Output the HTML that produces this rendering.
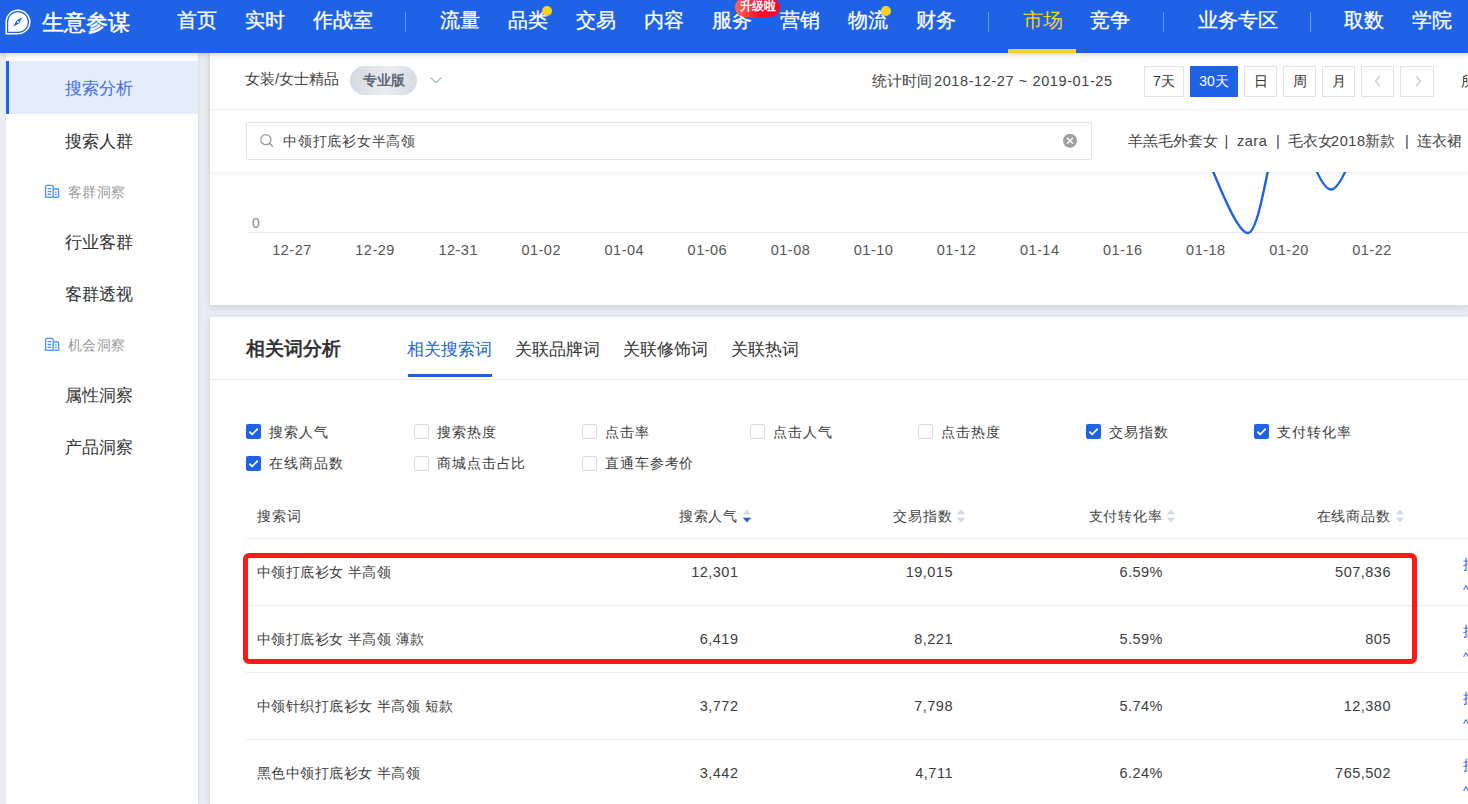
<!DOCTYPE html>
<html><head><meta charset="utf-8">
<style>
*{box-sizing:border-box;margin:0;padding:0}
html,body{width:1468px;height:804px;overflow:hidden}
body{position:relative;background:#e9ecf1;font-family:"Liberation Sans",sans-serif;color:#333}
.a{position:absolute;white-space:nowrap}
#nav{position:absolute;left:0;top:0;width:1468px;height:53px;background:#2062e6;z-index:5;box-shadow:0 1px 6px rgba(0,0,0,.2)}
#nav .m{position:absolute;top:8px;font-size:19.5px;line-height:24px;color:#fff;-webkit-text-stroke:.3px currentColor}
#nav .dv{position:absolute;top:12px;width:1px;height:20px;background:rgba(255,255,255,.35)}
#nav .dot{position:absolute;width:10px;height:10px;border-radius:50%;background:#f6d21f}
#side{position:absolute;left:6px;top:52px;width:192px;height:752px;background:#fff;box-shadow:1px 0 3px rgba(0,0,0,.07)}
#side .it{position:absolute;left:59px;font-size:16.5px;line-height:20px;color:#333}
#side .hd{position:absolute;left:62px;font-size:14px;letter-spacing:.4px;line-height:16px;color:#999}
#card1{position:absolute;left:210px;top:52px;width:1258px;height:253px;background:#fff;box-shadow:0 2px 7px rgba(0,0,0,.13)}
#card2{position:absolute;left:210px;top:317px;width:1258px;height:487px;background:#fff;box-shadow:0 2px 7px rgba(0,0,0,.13)}
.btn{position:absolute;top:66px;height:31px;border:1px solid #e2e2e2;background:#fff;font-size:14px;line-height:29px;text-align:center;color:#333}
</style></head><body>

<div id="nav">
  <svg class="a" style="left:5px;top:9px" width="26" height="26" viewBox="0 0 26 26">
    <path d="M13 1.2a11.8 11.8 0 1 1 0 23.6H1.2V13A11.8 11.8 0 0 1 13 1.2z" fill="none" stroke="#fff" stroke-width="1.5"/>
    <path d="M13 3.2a9.8 9.8 0 1 1 0 19.6H3.2V13A9.8 9.8 0 0 1 13 3.2z" fill="#fff"/>
    <path d="M17.5 8.2L14.2 14.2L8.2 17.8L11.6 11.6z" fill="#2062e6"/>
    <circle cx="12.9" cy="12.9" r="1" fill="#fff"/>
  </svg>
  <div class="a" style="left:42px;top:9px;font-size:22px;line-height:28px;color:#fff;-webkit-text-stroke:.5px #fff">生意参谋</div>
  <div class="m" style="left:177px">首页</div>
  <div class="m" style="left:245px">实时</div>
  <div class="m" style="left:313px">作战室</div>
  <div class="dv" style="left:405px"></div>
  <div class="m" style="left:440px">流量</div>
  <div class="m" style="left:508px">品类</div>
  <div class="dot" style="left:542px;top:6px"></div>
  <div class="m" style="left:576px">交易</div>
  <div class="m" style="left:644px">内容</div>
  <div class="m" style="left:712px">服务</div>
  <div class="m" style="left:780px">营销</div>
  <div class="m" style="left:848px">物流</div>
  <div class="dot" style="left:881px;top:6px"></div>
  <div class="m" style="left:916px">财务</div>
  <div class="a" style="left:735px;top:-2px;width:45px;height:19px;border-radius:9.5px;background:linear-gradient(90deg,#ff6d55,#ff0a30 55%,#ff002a);color:#fff;font-size:12px;line-height:17px;text-align:center;font-weight:bold;padding-top:0">升级啦</div>
  <div class="dv" style="left:988px"></div>
  <div class="m" style="left:1023px;color:#f6d121;-webkit-text-stroke:0">市场</div>
  <div class="a" style="left:1008px;top:49px;width:68px;height:4px;background:#f6d121"></div>
  <div class="m" style="left:1090px">竞争</div>
  <div class="dv" style="left:1163px"></div>
  <div class="m" style="left:1198px">业务专区</div>
  <div class="dv" style="left:1310px"></div>
  <div class="m" style="left:1344px">取数</div>
  <div class="m" style="left:1412px">学院</div>
</div>

<div id="side">
  <div class="a" style="left:0;top:9px;width:192px;height:53px;background:#e5edfb;border-left:3px solid #2062e6"></div>
  <div class="it" style="top:26px;color:#3f6fe3">搜索分析</div>
  <div class="it" style="top:79px">搜索人群</div>
  <svg class="a" style="left:38px;top:132px" width="16" height="14" viewBox="0 0 16 14"><g fill="none" stroke="#4596f7" stroke-width="1.3"><path d="M1.6 13V2.6Q1.6 1.4 2.8 1.4H8Q9.2 1.4 9.2 2.6V13"/><path d="M9.2 5H13.6Q14.6 5 14.6 6V13"/><path d="M0.6 13.2H15.4"/><path d="M3.6 4.6H7.2M3.6 7.5H7.2M3.6 10.4H7.2M11 8.2H12.8M11 10.6H12.8"/></g></svg><div class="hd" style="top:132px">客群洞察</div>
  <div class="it" style="top:180px">行业客群</div>
  <div class="it" style="top:232px">客群透视</div>
  <svg class="a" style="left:38px;top:285px" width="16" height="14" viewBox="0 0 16 14"><g fill="none" stroke="#4596f7" stroke-width="1.3"><path d="M1.6 13V2.6Q1.6 1.4 2.8 1.4H8Q9.2 1.4 9.2 2.6V13"/><path d="M9.2 5H13.6Q14.6 5 14.6 6V13"/><path d="M0.6 13.2H15.4"/><path d="M3.6 4.6H7.2M3.6 7.5H7.2M3.6 10.4H7.2M11 8.2H12.8M11 10.6H12.8"/></g></svg><div class="hd" style="top:285px">机会洞察</div>
  <div class="it" style="top:333px">属性洞察</div>
  <div class="it" style="top:385px">产品洞察</div>
</div>

<div id="card1"></div>
<!-- chart -->
<svg class="a" style="left:210px;top:172px" width="1258" height="133" viewBox="210 172 1258 133">
  <line x1="247" y1="232.5" x2="1468" y2="232.5" stroke="#e6ecf5" stroke-width="1"/>
  <path d="M1204 150 C1214 172, 1236 233, 1247.9 233 C1256 233, 1263 196, 1272 150 M1308 150 C1316 172, 1324 189.5, 1331 189.5 C1338 189.5, 1346 172, 1354 150" fill="none" stroke="#2062e6" stroke-width="2.4"/>
</svg>
<div class="a" style="left:252px;top:214px;font-size:14px;line-height:18px;color:#888">0</div>
<div class="a" id="xl" style="left:0;top:241px;font-size:14.5px;line-height:18px;color:#555;letter-spacing:.5px"><span style="position:absolute;left:272.0px;width:40px;text-align:center">12-27</span><span style="position:absolute;left:355.1px;width:40px;text-align:center">12-29</span><span style="position:absolute;left:438.2px;width:40px;text-align:center">12-31</span><span style="position:absolute;left:521.2px;width:40px;text-align:center">01-02</span><span style="position:absolute;left:604.3px;width:40px;text-align:center">01-04</span><span style="position:absolute;left:687.4px;width:40px;text-align:center">01-06</span><span style="position:absolute;left:770.5px;width:40px;text-align:center">01-08</span><span style="position:absolute;left:853.6px;width:40px;text-align:center">01-10</span><span style="position:absolute;left:936.6px;width:40px;text-align:center">01-12</span><span style="position:absolute;left:1019.7px;width:40px;text-align:center">01-14</span><span style="position:absolute;left:1102.8px;width:40px;text-align:center">01-16</span><span style="position:absolute;left:1185.9px;width:40px;text-align:center">01-18</span><span style="position:absolute;left:1269.0px;width:40px;text-align:center">01-20</span><span style="position:absolute;left:1352.0px;width:40px;text-align:center">01-22</span></div>
<!-- sticky header -->
<div class="a" style="left:210px;top:52px;width:1258px;height:120px;background:#fff;box-shadow:0 2px 4px rgba(0,0,0,.06)">
</div>
<div class="a" style="left:210px;top:109px;width:1258px;height:1px;background:#eeeeee"></div>
<div class="a" style="left:245px;top:70px;font-size:15px;line-height:18px;color:#444;letter-spacing:.05px">女装/女士精品</div>
<div class="a" style="left:350px;top:66px;width:67px;height:29px;border-radius:14.5px;background:linear-gradient(100deg,#d3d7e1 0%,#ebecf1 55%,#d6d9e3 100%);color:#5e6679;font-size:14px;line-height:29px;text-align:center;font-weight:bold">专业版</div>
<svg class="a" style="left:429px;top:75px" width="14" height="10" viewBox="0 0 14 10"><path d="M1.5 2.5L7 7.5L12.5 2.5" fill="none" stroke="#a6bdd1" stroke-width="1.3"/></svg>
<div class="a" style="left:872px;top:72px;font-size:14.5px;line-height:18px;color:#444">统计时间</div><div class="a" style="left:934px;top:72px;font-size:14.5px;line-height:18px;color:#444;letter-spacing:.6px">2018-12-27 ~ 2019-01-25</div>
<div class="btn" style="left:1144px;width:40px">7天</div>
<div class="btn" style="left:1190px;width:48px;background:#2062e6;border-color:#2062e6;color:#fff">30天</div>
<div class="btn" style="left:1244px;width:33px">日</div>
<div class="btn" style="left:1283px;width:33px">周</div>
<div class="btn" style="left:1322px;width:33px">月</div>
<div class="btn" style="left:1361px;width:33px"><svg style="position:absolute;left:10px;top:7px" width="12" height="14" viewBox="0 0 12 14"><path d="M8 2L3.5 7L8 12" fill="none" stroke="#c8c8c8" stroke-width="1.2"/></svg></div>
<div class="btn" style="left:1400px;width:34px"><svg style="position:absolute;left:11px;top:7px" width="12" height="14" viewBox="0 0 12 14"><path d="M4 2L8.5 7L4 12" fill="none" stroke="#c8c8c8" stroke-width="1.2"/></svg></div>
<div class="a" style="left:1461px;top:72px;font-size:14px;line-height:18px;color:#333">所有终端</div>
<div class="a" style="left:246px;top:122px;width:846px;height:38px;border:1px solid #e3e3e3;border-radius:2px;background:#fff"></div>
<svg class="a" style="left:258px;top:132px" width="18" height="18" viewBox="0 0 18 18"><circle cx="7.9" cy="7.7" r="5" fill="none" stroke="#999" stroke-width="1.3"/><path d="M11.5 11.3L14.8 14.6" stroke="#999" stroke-width="1.4"/></svg>
<div class="a" style="left:283px;top:132px;font-size:14px;line-height:18px;color:#444;letter-spacing:.75px">中领打底衫女半高领</div>
<svg class="a" style="left:1062px;top:133px" width="16" height="16" viewBox="0 0 16 16"><circle cx="8" cy="7.7" r="7" fill="#a0a0a0"/><path d="M5 4.7L11 10.7M11 4.7L5 10.7" stroke="#fff" stroke-width="1.3"/></svg>
<div class="a" style="left:1128px;top:132px;font-size:14.5px;line-height:18px;color:#444;letter-spacing:0px">羊羔毛外套女</div><div class="a" style="left:1224.5px;top:132px;font-size:14.5px;line-height:18px;color:#444;letter-spacing:0px">|</div><div class="a" style="left:1237px;top:132px;font-size:14.5px;line-height:18px;color:#444;letter-spacing:0.5px">zara</div><div class="a" style="left:1276px;top:132px;font-size:14.5px;line-height:18px;color:#444;letter-spacing:0px">|</div><div class="a" style="left:1288px;top:132px;font-size:14.5px;line-height:18px;color:#444;letter-spacing:0px">毛衣女</div><div class="a" style="left:1331px;top:132px;font-size:14.5px;line-height:18px;color:#444;letter-spacing:0.6px">2018</div><div class="a" style="left:1365px;top:132px;font-size:14.5px;line-height:18px;color:#444;letter-spacing:0px">新款</div><div class="a" style="left:1405px;top:132px;font-size:14.5px;line-height:18px;color:#444;letter-spacing:0px">|</div><div class="a" style="left:1417px;top:132px;font-size:14.5px;line-height:18px;color:#444;letter-spacing:0px">连衣裙</div>
<div id="card2"></div>
<div class="a" style="left:246px;top:337px;font-size:19px;line-height:24px;color:#333;font-weight:bold">相关词分析</div>
<div class="a" style="left:407px;top:339px;font-size:17px;line-height:22px;color:#2062e6">相关搜索词</div>
<div class="a" style="left:408px;top:374px;width:84px;height:3px;background:#2062e6"></div>
<div class="a" style="left:515px;top:339px;font-size:17px;line-height:22px;color:#333">关联品牌词</div>
<div class="a" style="left:623px;top:339px;font-size:17px;line-height:22px;color:#333">关联修饰词</div>
<div class="a" style="left:731px;top:339px;font-size:17px;line-height:22px;color:#333">关联热词</div>
<div class="a" style="left:210px;top:379px;width:1258px;height:1px;background:#e8e8e8"></div>
<!-- checkboxes -->
<div id="cbs"><div class="a" style="left:246px;top:424px;width:15px;height:15px;border-radius:2px;background:#2062e6"><svg style="position:absolute;left:0;top:0" width="15" height="15" viewBox="0 0 15 15"><path d="M3.3 7.6L6.2 10.4L11.8 4.6" fill="none" stroke="#fff" stroke-width="1.6"/></svg></div><div class="a" style="left:269px;top:423px;font-size:14px;letter-spacing:.9px;line-height:18px;color:#3d3d3d">搜索人气</div><div class="a" style="left:414px;top:424px;width:15px;height:15px;border-radius:2px;border:1px solid #dcdcdc;background:#fff"></div><div class="a" style="left:437px;top:423px;font-size:14px;letter-spacing:.9px;line-height:18px;color:#3d3d3d">搜索热度</div><div class="a" style="left:582px;top:424px;width:15px;height:15px;border-radius:2px;border:1px solid #dcdcdc;background:#fff"></div><div class="a" style="left:605px;top:423px;font-size:14px;letter-spacing:.9px;line-height:18px;color:#3d3d3d">点击率</div><div class="a" style="left:750px;top:424px;width:15px;height:15px;border-radius:2px;border:1px solid #dcdcdc;background:#fff"></div><div class="a" style="left:773px;top:423px;font-size:14px;letter-spacing:.9px;line-height:18px;color:#3d3d3d">点击人气</div><div class="a" style="left:918px;top:424px;width:15px;height:15px;border-radius:2px;border:1px solid #dcdcdc;background:#fff"></div><div class="a" style="left:941px;top:423px;font-size:14px;letter-spacing:.9px;line-height:18px;color:#3d3d3d">点击热度</div><div class="a" style="left:1086px;top:424px;width:15px;height:15px;border-radius:2px;background:#2062e6"><svg style="position:absolute;left:0;top:0" width="15" height="15" viewBox="0 0 15 15"><path d="M3.3 7.6L6.2 10.4L11.8 4.6" fill="none" stroke="#fff" stroke-width="1.6"/></svg></div><div class="a" style="left:1109px;top:423px;font-size:14px;letter-spacing:.9px;line-height:18px;color:#3d3d3d">交易指数</div><div class="a" style="left:1254px;top:424px;width:15px;height:15px;border-radius:2px;background:#2062e6"><svg style="position:absolute;left:0;top:0" width="15" height="15" viewBox="0 0 15 15"><path d="M3.3 7.6L6.2 10.4L11.8 4.6" fill="none" stroke="#fff" stroke-width="1.6"/></svg></div><div class="a" style="left:1277px;top:423px;font-size:14px;letter-spacing:.9px;line-height:18px;color:#3d3d3d">支付转化率</div><div class="a" style="left:246px;top:456px;width:15px;height:15px;border-radius:2px;background:#2062e6"><svg style="position:absolute;left:0;top:0" width="15" height="15" viewBox="0 0 15 15"><path d="M3.3 7.6L6.2 10.4L11.8 4.6" fill="none" stroke="#fff" stroke-width="1.6"/></svg></div><div class="a" style="left:269px;top:454px;font-size:14px;letter-spacing:.9px;line-height:18px;color:#3d3d3d">在线商品数</div><div class="a" style="left:414px;top:456px;width:15px;height:15px;border-radius:2px;border:1px solid #dcdcdc;background:#fff"></div><div class="a" style="left:437px;top:454px;font-size:14px;letter-spacing:.9px;line-height:18px;color:#3d3d3d">商城点击占比</div><div class="a" style="left:582px;top:456px;width:15px;height:15px;border-radius:2px;border:1px solid #dcdcdc;background:#fff"></div><div class="a" style="left:605px;top:454px;font-size:14px;letter-spacing:.9px;line-height:18px;color:#3d3d3d">直通车参考价</div></div>
<!-- table -->
<div id="tbl"><div class="a" style="left:257px;top:507px;font-size:14px;letter-spacing:.8px;line-height:18px;color:#444">搜索词</div><div class="a" style="left:538.0px;width:200px;text-align:right;top:507px;font-size:14px;letter-spacing:.8px;line-height:18px;color:#444">搜索人气</div><svg class="a" style="left:742px;top:508px" width="10" height="16" viewBox="0 0 10 16"><path d="M5 1.5L9.2 6.3H0.8z" fill="#d0d9e5"/><path d="M5 14.5L9.2 9.7H0.8z" fill="#2062e6"/></svg><div class="a" style="left:752.5px;width:200px;text-align:right;top:507px;font-size:14px;letter-spacing:.8px;line-height:18px;color:#444">交易指数</div><svg class="a" style="left:956px;top:508px" width="10" height="16" viewBox="0 0 10 16"><path d="M5 1.5L9.2 6.3H0.8z" fill="#d0d9e5"/><path d="M5 14.5L9.2 9.7H0.8z" fill="#d0d9e5"/></svg><div class="a" style="left:962.5px;width:200px;text-align:right;top:507px;font-size:14px;letter-spacing:.8px;line-height:18px;color:#444">支付转化率</div><svg class="a" style="left:1166px;top:508px" width="10" height="16" viewBox="0 0 10 16"><path d="M5 1.5L9.2 6.3H0.8z" fill="#d0d9e5"/><path d="M5 14.5L9.2 9.7H0.8z" fill="#d0d9e5"/></svg><div class="a" style="left:1190.5px;width:200px;text-align:right;top:507px;font-size:14px;letter-spacing:.8px;line-height:18px;color:#444">在线商品数</div><svg class="a" style="left:1395px;top:508px" width="10" height="16" viewBox="0 0 10 16"><path d="M5 1.5L9.2 6.3H0.8z" fill="#d0d9e5"/><path d="M5 14.5L9.2 9.7H0.8z" fill="#d0d9e5"/></svg><div class="a" style="left:246px;top:538px;width:1222px;height:1px;background:#eeeeee"></div><div class="a" style="left:246px;top:605px;width:1222px;height:1px;background:#eeeeee"></div><div class="a" style="left:246px;top:672px;width:1222px;height:1px;background:#eeeeee"></div><div class="a" style="left:246px;top:739px;width:1222px;height:1px;background:#eeeeee"></div><div class="a" style="left:257px;top:562.5px;font-size:14px;letter-spacing:.45px;line-height:18px;color:#3d3d3d">中领打底衫女 半高领</div><div class="a" style="left:538.5px;width:200px;text-align:right;top:562.5px;font-size:14.5px;letter-spacing:.5px;line-height:18px;color:#3d3d3d">12,301</div><div class="a" style="left:753px;width:200px;text-align:right;top:562.5px;font-size:14.5px;letter-spacing:.5px;line-height:18px;color:#3d3d3d">19,015</div><div class="a" style="left:963px;width:200px;text-align:right;top:562.5px;font-size:14.5px;letter-spacing:.5px;line-height:18px;color:#3d3d3d">6.59%</div><div class="a" style="left:1191px;width:200px;text-align:right;top:562.5px;font-size:14.5px;letter-spacing:.5px;line-height:18px;color:#3d3d3d">507,836</div><div class="a" style="left:1463px;top:554.5px;font-size:14px;line-height:18px;color:#2062e6">搜索</div><div class="a" style="left:1463px;top:582.5px;font-size:12px;line-height:14px;color:#2062e6">^</div><div class="a" style="left:257px;top:629.5px;font-size:14px;letter-spacing:.45px;line-height:18px;color:#3d3d3d">中领打底衫女 半高领 薄款</div><div class="a" style="left:538.5px;width:200px;text-align:right;top:629.5px;font-size:14.5px;letter-spacing:.5px;line-height:18px;color:#3d3d3d">6,419</div><div class="a" style="left:753px;width:200px;text-align:right;top:629.5px;font-size:14.5px;letter-spacing:.5px;line-height:18px;color:#3d3d3d">8,221</div><div class="a" style="left:963px;width:200px;text-align:right;top:629.5px;font-size:14.5px;letter-spacing:.5px;line-height:18px;color:#3d3d3d">5.59%</div><div class="a" style="left:1191px;width:200px;text-align:right;top:629.5px;font-size:14.5px;letter-spacing:.5px;line-height:18px;color:#3d3d3d">805</div><div class="a" style="left:1463px;top:621.5px;font-size:14px;line-height:18px;color:#2062e6">搜索</div><div class="a" style="left:1463px;top:649.5px;font-size:12px;line-height:14px;color:#2062e6">^</div><div class="a" style="left:257px;top:696.5px;font-size:14px;letter-spacing:.45px;line-height:18px;color:#3d3d3d">中领针织打底衫女 半高领 短款</div><div class="a" style="left:538.5px;width:200px;text-align:right;top:696.5px;font-size:14.5px;letter-spacing:.5px;line-height:18px;color:#3d3d3d">3,772</div><div class="a" style="left:753px;width:200px;text-align:right;top:696.5px;font-size:14.5px;letter-spacing:.5px;line-height:18px;color:#3d3d3d">7,798</div><div class="a" style="left:963px;width:200px;text-align:right;top:696.5px;font-size:14.5px;letter-spacing:.5px;line-height:18px;color:#3d3d3d">5.74%</div><div class="a" style="left:1191px;width:200px;text-align:right;top:696.5px;font-size:14.5px;letter-spacing:.5px;line-height:18px;color:#3d3d3d">12,380</div><div class="a" style="left:1463px;top:688.5px;font-size:14px;line-height:18px;color:#2062e6">搜索</div><div class="a" style="left:1463px;top:716.5px;font-size:12px;line-height:14px;color:#2062e6">^</div><div class="a" style="left:257px;top:763.5px;font-size:14px;letter-spacing:.45px;line-height:18px;color:#3d3d3d">黑色中领打底衫女 半高领</div><div class="a" style="left:538.5px;width:200px;text-align:right;top:763.5px;font-size:14.5px;letter-spacing:.5px;line-height:18px;color:#3d3d3d">3,442</div><div class="a" style="left:753px;width:200px;text-align:right;top:763.5px;font-size:14.5px;letter-spacing:.5px;line-height:18px;color:#3d3d3d">4,711</div><div class="a" style="left:963px;width:200px;text-align:right;top:763.5px;font-size:14.5px;letter-spacing:.5px;line-height:18px;color:#3d3d3d">6.24%</div><div class="a" style="left:1191px;width:200px;text-align:right;top:763.5px;font-size:14.5px;letter-spacing:.5px;line-height:18px;color:#3d3d3d">765,502</div><div class="a" style="left:1463px;top:755.5px;font-size:14px;line-height:18px;color:#2062e6">搜索</div><div class="a" style="left:1463px;top:783.5px;font-size:12px;line-height:14px;color:#2062e6">^</div></div>
<div class="a" style="left:243px;top:553px;width:1174px;height:111px;border:5px solid #fa1a1a;border-radius:6px"></div>

</body></html>
